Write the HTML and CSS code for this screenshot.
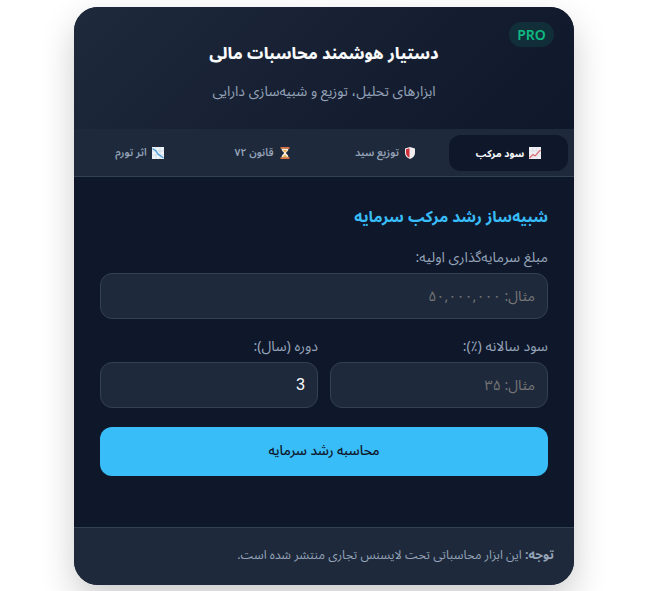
FILE: index.html
```html
<!DOCTYPE html>
<html lang="fa" dir="rtl">
<head>
<meta charset="utf-8">
<title>دستیار هوشمند محاسبات مالی</title>
<link rel="stylesheet" href="styles.css">
</head>
<body>
<main class="card">
  <header class="head">
    <span class="badge">PRO</span>
    <h1>دستیار هوشمند محاسبات مالی</h1>
    <p>ابزارهای تحلیل، توزیع و شبیه‌سازی دارایی</p>
  </header>
  <nav class="tabs">
    <button class="tab active"><svg class="ico" viewBox="0 0 12 12"><rect width="12" height="12" fill="#f1eff2"/><path d="M0 4h12M0 8h12M4 0v12M8 0v12" stroke="#d5dbe2" stroke-width=".6"/><path d="M.5 11 4 7.500l2 1.500 5.500-6" fill="none" stroke="#dc7078" stroke-width="1.300"/></svg>سود مرکب</button>
    <button class="tab"><svg class="ico" viewBox="0 0 12 12"><path d="M6 0 11 1.600V6c0 3-2.200 4.800-5 6C3.200 10.800 1 9 1 6V1.600z" fill="#f2eeee"/><path d="M5.500 1.200 2 2.300V6c0 2.200 1.500 3.800 3.500 4.800z" fill="#cf2f3c"/></svg>توزیع سید</button>
    <button class="tab"><svg class="ico" viewBox="0 0 12 12"><rect x="1.500" y="0" width="9" height="1.800" fill="#d9703e"/><rect x="1.500" y="10.200" width="9" height="1.800" fill="#d9703e"/><path d="M2.500 1.800h7c0 2.400-2.500 3.200-2.500 4.200s2.500 1.800 2.500 4.200h-7C2.500 7.800 5 7 5 6S2.500 4.200 2.500 1.800z" fill="#f8efe0"/><path d="M3.500 3h5L6 5.500zM3.500 10 6 7.500 8.500 10z" fill="#f0b850"/></svg>قانون ۷۲</button>
    <button class="tab"><svg class="ico" viewBox="0 0 12 12"><rect width="12" height="12" fill="#eef3f8"/><path d="M0 4h12M0 8h12M4 0v12M8 0v12" stroke="#c4d4e2" stroke-width=".6"/><path d="M.5 1.500 4 4l2 3 5.500 4" fill="none" stroke="#4a9bd8" stroke-width="1.300"/></svg>اثر تورم</button>
  </nav>
  <section class="body">
    <h2>شبیه‌ساز رشد مرکب سرمایه</h2>
    <div class="field">
      <label for="amount">مبلغ سرمایه‌گذاری اولیه:</label>
      <input id="amount" placeholder="مثال: ۵۰,۰۰۰,۰۰۰">
    </div>
    <div class="row">
      <div class="field">
        <label for="rate">سود سالانه (٪):</label>
        <input id="rate" placeholder="مثال: ۳۵">
      </div>
      <div class="field">
        <label for="years">دوره (سال):</label>
        <input id="years" value="3">
      </div>
    </div>
    <button class="submit">محاسبه رشد سرمایه</button>
  </section>
  <footer class="foot"><strong>توجه:</strong> این ابزار محاسباتی تحت لایسنس تجاری منتشر شده است.</footer>
</main>
</body>
</html>
```
FILE: styles.css
```css
* { box-sizing: border-box; }
html, body { height: 100%; }
body {
  margin: 0;
  background: #fff;
  font-family: "Noto Sans Arabic", sans-serif;
  display: flex;
  justify-content: center;
  padding: 7px 4px 0 0;
  overflow: hidden;
}
.card {
  width: 500px;
  height: 578px;
  background: #0f172a;
  border-radius: 24px;
  overflow: hidden;
  box-shadow: 0 15px 35px rgba(0,0,0,.2);
  display: flex;
  flex-direction: column;
}
.head {
  position: relative;
  height: 122px;
  padding-top: 33px;
  text-align: center;
  background: linear-gradient(135deg, #1e293b, #0f172a);
}
.badge {
  position: absolute;
  top: 15px;
  right: 20px;
  width: 45px;
  height: 25px;
  border-radius: 13px;
  background: rgba(16,185,129,.13);
  color: #10b981;
  font: 600 14px/25px "Noto Sans", sans-serif;
  text-align: center;
}
h1 {
  margin: 0;
  color: #f8fafc;
  font-size: 16.2px;
  line-height: 28px;
  font-weight: 800;
}
.head p {
  margin: 14px 0 0;
  color: #94a3b8;
  font-size: 14px;
  line-height: 20px;
}
.tabs {
  height: 48px;
  display: flex;
  gap: 4px;
  padding: 6px 6px 5px;
  background: #1e293b;
  border-bottom: 1px solid #334155;
}
.tab {
  flex: 1;
  height: 36px;
  border: 0;
  border-radius: 12px;
  background: transparent;
  color: #94a3b8;
  font: 600 10.5px "Noto Sans Arabic", sans-serif;
  display: flex;
  align-items: center;
  justify-content: center;
  gap: 5px;
}
.tab.active { background: #0f172a; color: #f8fafc; font-weight: 700; font-size: 10px; }
.ico { width: 12px; height: 12px; flex: none; }
.body { flex: 1; padding: 29px 26px 0; }
h2 {
  margin: 0 0 19px;
  color: #38bdf8;
  font-size: 15.6px;
  line-height: 24px;
  font-weight: 700;
}
.field { display: flex; flex-direction: column; flex: 1; min-width: 0; }
label {
  color: #94a3b8;
  font-size: 14.2px;
  line-height: 16px;
  margin-bottom: 8px;
}
input {
  height: 46px;
  width: 100%;
  background: #1e293b;
  border: 1px solid #334155;
  border-radius: 12px;
  padding: 0 12px;
  color: #f8fafc;
  font: 16px "Liberation Sans", sans-serif;
}
input::placeholder { color: #757575; font-family: "Noto Sans Arabic", sans-serif; font-size: 14.2px; }
.row { display: flex; gap: 12px; margin-top: 19px; }
.submit {
  display: block;
  width: 100%;
  height: 49px;
  margin-top: 19px;
  padding: 0 0 2px;
  border: 0;
  border-radius: 12px;
  background: #38bdf8;
  color: #0f172a;
  font: 500 13.4px "Noto Sans Arabic", sans-serif;
}
.foot {
  height: 58px;
  padding: 18px 20px 0;
  background: #1e293b;
  border-top: 1px solid #334155;
  color: #94a3b8;
  font-size: 12.35px;
  line-height: 18px;
}
```
